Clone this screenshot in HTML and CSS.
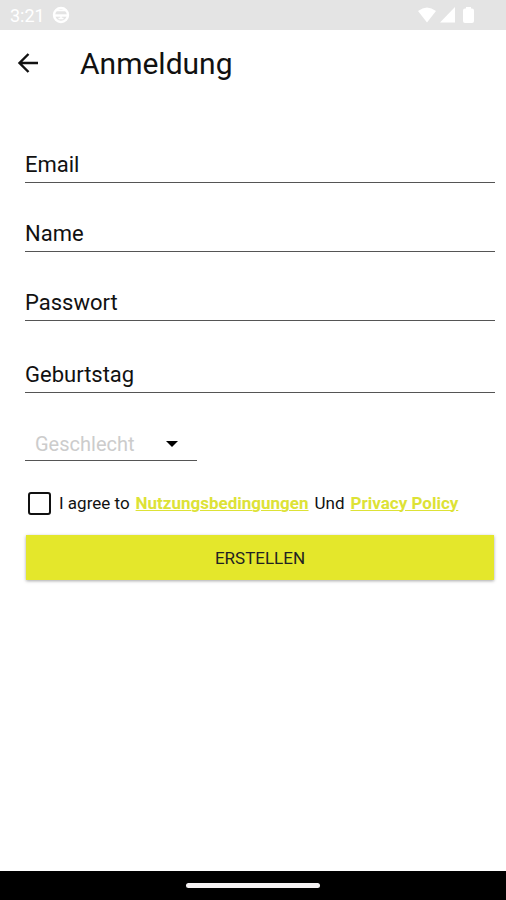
FILE: index.html
```html
<!DOCTYPE html>
<html lang="de">
<head>
    <meta charset="UTF-8">
    <meta name="viewport" content="width=device-width, initial-scale=1.0">
    <title>Anmeldung</title>
    <link rel="stylesheet" href="styles.css">
</head>
<body>
    <div class="status-bar">
        <span class="time">3:21</span>
        <svg class="globe" width="18" height="18" viewBox="0 0 18 18" fill="none" stroke="#fff" stroke-width="2.400">
            <circle cx="9" cy="9" r="7"/>
            <path d="M2 9.500h14"/>
            <path d="M4 4.500h10M6.500 12.500h5M9 10v3" stroke-width="1.500"/>
        </svg>
        <div class="status-icons">
            <svg width="20" height="16" viewBox="0 0 20 16" fill="#fff">
                <path d="M1 4Q10 -3 19 4L10 15.500z"/>
            </svg>
            <svg width="15" height="16" viewBox="0 0 15 16" fill="#fff">
                <path d="M15 0v15.500H0z"/>
            </svg>
            <svg class="battery" width="11" height="16" viewBox="0 0 11 16" fill="#fff">
                <path d="M3 1.500V0h5v1.500h1q2 0 2 2V14q0 2-2 2H2q-2 0-2-2V3.500q0-2 2-2z"/>
            </svg>
        </div>
    </div>
    <header class="toolbar">
        <button type="button" class="back" aria-label="Zurück">
            <svg width="22" height="22" viewBox="0 0 22 22" fill="none" stroke="#111" stroke-width="2.400">
                <path d="M21 11H3M11.500 2L2.500 11l9 9"/>
            </svg>
        </button>
        <h1>Anmeldung</h1>
    </header>
    <main>
        <form class="signup-form">
            <input class="field" type="email" name="email" placeholder="Email" aria-label="Email">
            <input class="field" type="text" name="name" placeholder="Name" aria-label="Name">
            <input class="field" type="password" name="password" placeholder="Passwort" aria-label="Passwort">
            <input class="field birthday" type="text" name="birthday" placeholder="Geburtstag" aria-label="Geburtstag">
            <select class="gender" name="gender" aria-label="Geschlecht">
                <option>Geschlecht</option>
            </select>
            <div class="terms">
                <input type="checkbox" id="agree" name="agree">
                <label for="agree">I agree to <a href="#terms">Nutzungsbedingungen</a> Und <a href="#privacy">Privacy Policy</a></label>
            </div>
            <button type="submit" class="submit">ERSTELLEN</button>
        </form>
    </main>
    <footer class="nav-bar">
        <div class="handle"></div>
    </footer>
</body>
</html>
```
FILE: styles.css
```css
* {
    box-sizing: border-box;
}
body {
    font-family: Roboto, "Liberation Sans", sans-serif;
    margin: 0;
    min-height: 100vh;
    display: flex;
    flex-direction: column;
    background-color: #fff;
    color: #111;
}
.status-bar {
    height: 30px;
    padding: 0 32px 0 10px;
    display: flex;
    align-items: center;
    gap: 7px;
    background-color: #e4e4e4;
    color: #fff;
}
.time {
    font-size: 18px;
}
.status-icons {
    margin-left: auto;
    display: flex;
    gap: 3px;
}
.battery {
    margin-left: 5px;
}
.toolbar {
    height: 66px;
    padding-left: 17px;
    display: flex;
    align-items: center;
    gap: 41px;
}
.back {
    display: flex;
    padding: 0;
    border: none;
    background: none;
    cursor: pointer;
}
h1 {
    margin: 0;
    font-size: 30px;
    font-weight: 400;
}
main {
    flex: 1;
    padding: 45px 11px 0 25px;
}
.signup-form {
    display: flex;
    flex-direction: column;
}
.field {
    width: 100%;
    height: 42px;
    margin-bottom: 27px;
    padding: 5px 0 0;
    border: none;
    border-bottom: 1px solid #555;
    border-radius: 0;
    background: none;
    font-family: inherit;
    font-size: 22px;
    color: #111;
}
.field::placeholder {
    color: #111;
    opacity: 1;
}
.birthday {
    margin-top: 3px;
}
.gender {
    appearance: none;
    width: 172px;
    height: 41px;
    padding: 8px 30px 0 10px;
    border: none;
    border-bottom: 1px solid #555;
    border-radius: 0;
    background: url("data:image/svg+xml,%3Csvg xmlns='http://www.w3.org/2000/svg' width='12' height='6'%3E%3Cpath d='M0 0h12L6 6z'/%3E%3C/svg%3E") no-repeat right 19px bottom 13px;
    font-family: inherit;
    font-size: 20px;
    color: #ccc;
}
.terms {
    display: flex;
    align-items: center;
    gap: 8px;
    height: 24px;
    margin: 30px 0 20px 3px;
    font-size: 17px;
    white-space: nowrap;
}
.terms label {
    display: flex;
    gap: 6px;
}
.terms input {
    appearance: none;
    flex: none;
    width: 23px;
    height: 23px;
    margin: 0;
    border: 2px solid #111;
    border-radius: 3px;
}
.terms input:checked {
    background-color: #e4e72b;
}
.terms a {
    color: #dde236;
    font-weight: 700;
    text-decoration-thickness: 1px;
}
.submit {
    height: 45px;
    margin: 0 1px;
    border: none;
    background-color: #e4e72b;
    box-shadow: 0 1px 3px rgba(0, 0, 0, 0.35);
    font-family: inherit;
    font-size: 17px;
    color: #222;
    cursor: pointer;
}
.nav-bar {
    height: 29px;
    display: flex;
    align-items: center;
    justify-content: center;
    background-color: #000;
}
.handle {
    width: 134px;
    height: 5px;
    border-radius: 3px;
    background-color: #f5f2f3;
}
```
